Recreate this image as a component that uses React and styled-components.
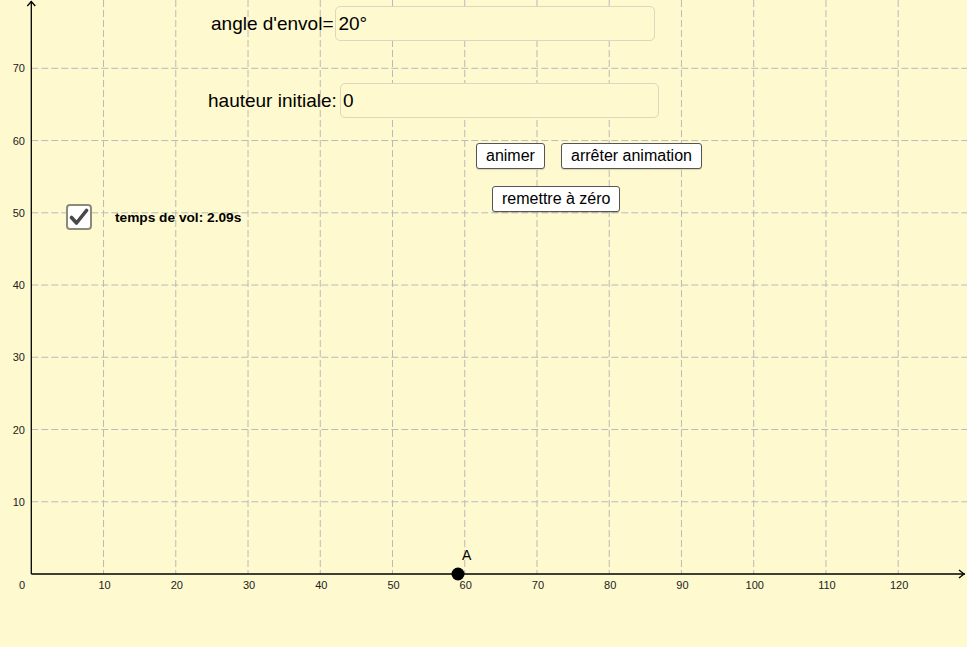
import React from 'react'
import styled, { createGlobalStyle } from 'styled-components'

const Global = createGlobalStyle`
  html, body { margin: 0; padding: 0; background: #fef9ce; }
  body { font-family: "Liberation Sans", Arial, sans-serif; }
`

const ORIGIN_X = 31.3
const ORIGIN_Y = 574
const UNIT = 7.224

const px = (u) => ORIGIN_X + u * UNIT
const py = (u) => ORIGIN_Y - u * UNIT

const Applet = styled.div`
  position: relative;
  width: 967px;
  height: 647px;
  overflow: hidden;
  background: #fef9ce;
`

const Graph = styled.svg`
  display: block;
  width: 967px;
  height: 647px;
`

// widgets sit on the geogebra canvas at their own coordinates
const Widget = styled.div`
  position: absolute;
  left: ${(p) => p.x}px;
  top: ${(p) => p.y}px;
  display: flex;
  align-items: center;
`

const Caption = styled.span`
  font-size: 19px;
  color: #000;
  white-space: nowrap;
  margin-right: ${(p) => p.gap || 2}px;
`

const InputBox = styled.div`
  box-sizing: border-box;
  width: ${(p) => p.w}px;
  height: 35px;
  border: 1px solid #dcd7bd;
  border-radius: 5px;
  background: #fef9ce;
  font-size: 19px;
  display: flex;
  align-items: center;
  padding-left: 2px;
  color: #000;
`

const Button = styled.button`
  box-sizing: border-box;
  height: 26px;
  padding: 0 9px;
  border: 1px solid #555;
  border-radius: 3px;
  background: #fff;
  font-family: "Liberation Sans", Arial, sans-serif;
  font-size: 16px;
  color: #000;
  white-space: nowrap;
  box-shadow: 0 1px 1px rgba(0, 0, 0, 0.15);
`

const CheckBox = styled.div`
  box-sizing: border-box;
  width: 26px;
  height: 26px;
  border: 2px solid #8c8a7a;
  border-radius: 4px;
  background: #fff;
  display: flex;
  align-items: center;
  justify-content: center;
  margin-right: 23px;
`

const FlightTime = styled.span`
  font-size: 13.7px;
  font-weight: bold;
  color: #000;
`

const xTicks = [1, 2, 3, 4, 5, 6, 7, 8, 9, 10, 11, 12, 13]
const yTicks = [1, 2, 3, 4, 5, 6, 7]

const Axes = () => (
  <Graph viewBox="0 0 967 647">
    <g stroke="#bababa" strokeWidth="1" strokeDasharray="7 3">
      {xTicks.map((k) => (
        <line key={'v' + k} x1={px(k * 10)} y1="0" x2={px(k * 10)} y2={ORIGIN_Y} />
      ))}
      {yTicks.map((k) => (
        <line key={'h' + k} x1={ORIGIN_X} y1={py(k * 10)} x2="967" y2={py(k * 10)} />
      ))}
    </g>
    <g stroke="#000" strokeWidth="1.3" fill="none">
      <line x1={ORIGIN_X} y1="1" x2={ORIGIN_X} y2={ORIGIN_Y} />
      <line x1={ORIGIN_X} y1={ORIGIN_Y} x2="965" y2={ORIGIN_Y} />
      <polyline points={`${ORIGIN_X - 4},6 ${ORIGIN_X},1.5 ${ORIGIN_X + 4},6`} />
      <polyline points={`959,${ORIGIN_Y - 4} 964,${ORIGIN_Y} 959,${ORIGIN_Y + 4}`} />
    </g>
    <g fontFamily="Liberation Sans, Arial, sans-serif" fontSize="11" fill="#222">
      <text x="22" y="589" textAnchor="middle">0</text>
      {xTicks.slice(0, 12).map((k) => (
        <text key={'xl' + k} x={px(k * 10) + 1} y="589" textAnchor="middle">
          {k * 10}
        </text>
      ))}
      {yTicks.map((k) => (
        <text key={'yl' + k} x="25" y={py(k * 10) + 4} textAnchor="end">
          {k * 10}
        </text>
      ))}
    </g>
    <circle cx="458" cy={ORIGIN_Y} r="6.5" fill="#000" />
    <text x="462" y="560" fontFamily="Liberation Sans, Arial, sans-serif" fontSize="14" fill="#000">
      A
    </text>
  </Graph>
)

const Check = () => (
  <svg width="20" height="18" viewBox="0 0 20 18">
    <path d="M2.5 9.5 L7.5 15 L17.5 2.5" fill="none" stroke="#484848" strokeWidth="3.6" strokeLinecap="round" strokeLinejoin="round" />
  </svg>
)

export default function App() {
  return (
    <Applet>
      <Global />
      <Axes />

      <Widget x={211} y={6}>
        <Caption gap={2}>angle d'envol=</Caption>
        <InputBox w={320}>20°</InputBox>
      </Widget>

      <Widget x={208} y={83}>
        <Caption gap={3}>hauteur initiale:</Caption>
        <InputBox w={319}>0</InputBox>
      </Widget>

      <Widget x={476} y={143}>
        <Button>animer</Button>
      </Widget>
      <Widget x={561} y={143}>
        <Button>arrêter animation</Button>
      </Widget>
      <Widget x={492} y={186}>
        <Button>remettre à zéro</Button>
      </Widget>

      <Widget x={66} y={204}>
        <CheckBox>
          <Check />
        </CheckBox>
        <FlightTime>temps de vol: 2.09s</FlightTime>
      </Widget>
    </Applet>
  )
}
